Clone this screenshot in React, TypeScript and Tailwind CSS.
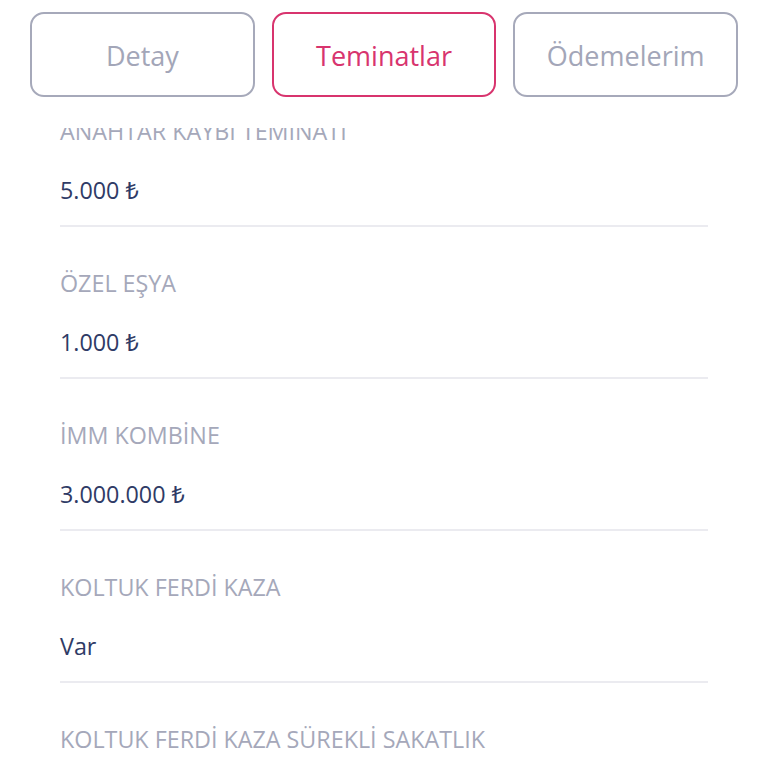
const tabs = [
  { label: 'Detay', active: false },
  { label: 'Teminatlar', active: true },
  { label: 'Ödemelerim', active: false },
];

const rows = [
  { title: 'ANAHTAR KAYBI TEMİNATI', value: '5.000 ₺' },
  { title: 'ÖZEL EŞYA', value: '1.000 ₺' },
  { title: 'İMM KOMBİNE', value: '3.000.000 ₺' },
  { title: 'KOLTUK FERDİ KAZA', value: 'Var' },
  { title: 'KOLTUK FERDİ KAZA SÜREKLİ SAKATLIK', value: 'Var' },
];

export default function App() {
  return (
    <div
      className="w-[768px] h-[768px] bg-white flex flex-col overflow-hidden"
      style={{ fontFamily: '"Open Sans", "Noto Sans", sans-serif' }}
    >
      <div className="flex-none h-[128px] bg-white px-[30px] pt-[12px] flex gap-[17px] relative z-10">
        {tabs.map((t) => (
          <button
            key={t.label}
            className={`w-[225px] h-[85px] rounded-[14px] border-2 bg-white text-[27px] pt-[4px] ${
              t.active ? 'border-[#d8346e] text-[#d8346e]' : 'border-[#a6a9ba] text-[#a3a6b8]'
            }`}
          >
            {t.label}
          </button>
        ))}
      </div>
      <div className="flex-1 overflow-hidden px-[60px]">
        {rows.map((r, i) => (
          <div
            key={r.title}
            className={`border-b-2 border-[#ebebf0] pb-[19px] ${i === 0 ? '-mt-[13px]' : 'pt-[40px]'}`}
          >
            <div className="text-[23.3px] leading-[32px] text-[#a5a8ba]">{r.title}</div>
            <div className="mt-[27px] text-[23.3px] leading-[32px] text-[#2f3b66]">{r.value}</div>
          </div>
        ))}
      </div>
    </div>
  );
}
